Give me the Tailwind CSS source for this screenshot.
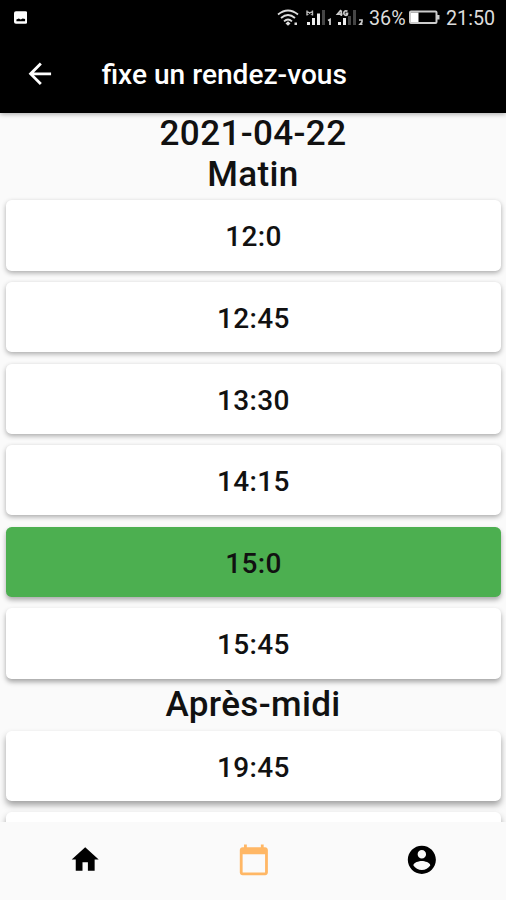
<!DOCTYPE html>
<html lang="fr">
<head>
<meta charset="utf-8">
<title>fixe un rendez-vous</title>
<script src="https://cdn.jsdelivr.net/npm/@tailwindcss/browser@4"></script>
</head>
<body class="w-[506px] h-[900px] overflow-hidden bg-[#fafafa] font-['Roboto','Noto_Sans',sans-serif] text-[#111] flex flex-col">
<header class="bg-black text-white h-[112.5px] shrink-0 z-10 shadow-[0_1px_5px_rgba(0,0,0,.35)]">
  <div class="h-9 flex items-center justify-between pl-[13.5px] pr-[11px]">
    <svg class="w-[13.5px] h-[13px] -mt-[1px]" viewBox="0 0 14 13"><rect width="14" height="13" rx="2" fill="#fff"/><path d="M2.500 10.500V8.500L5 7.500l2 1 2-1 2.500 .5v2.500z" fill="#000"/></svg>
    <div class="flex items-center text-[#dcdcdc]">
      <svg class="w-[92px] h-[22px]" viewBox="277 7 92 22" fill="none">
        <g stroke="#ddd" stroke-width="1.800"><path d="M278 14.500q10-8 20 0M281 18q7-6 14 0M284 21.300q4-3.600 8 0"/></g>
        <path d="M285.500 23.500l2.500-2.200 2.500 2.200-2.500 2.300zM294.500 22.500h2.500v2.500h-2.500z" fill="#ddd"/>
        <path d="M306.500 11l6.500 4M306.500 15l6.500-4M307 10.500v5M312.500 10.500v5" stroke="#bbb" stroke-width="1.400"/>
        <path d="M307 22h3v3h-3zM312 18h3v7h-3zM317 13.500h3v11.500h-3z" fill="#eee"/>
        <path d="M322 10h3v15h-3z" fill="#444"/>
        <path d="M328 20.500l2-1v5.500" stroke="#ccc" stroke-width="1.800"/>
        <path d="M341 10l-3.500 4.200h5M341.300 10.500v5.500M347.500 11.300c-4-2-5 4-1.500 4 1.500 0 1.500-1 1.500-2h-2" stroke="#ccc" stroke-width="1.700"/>
        <path d="M338 22h3v3h-3zM343 18h3v7h-3z" fill="#eee"/>
        <path d="M348 16h3v9h-3zM353 10h3v15h-3z" fill="#444"/>
        <path d="M359 20h3v2l-2 2.300h2.500" stroke="#ccc" stroke-width="1.600"/>
      </svg>
      <span class="w-[40px] text-[19.700px] leading-9 whitespace-nowrap pt-[1px]">36%</span>
      <svg class="w-[31px] h-[15px] mr-[6px] -mt-[2px]" viewBox="0 0 31 15"><rect x="1" y="1.500" width="26.500" height="11.500" rx="1" fill="none" stroke="#ccc" stroke-width="2"/><path d="M28 5h2.500v4.500H28z" fill="#ccc"/><path d="M2 2.500h7.500v9.500H2z" fill="#fff"/></svg>
      <span class="text-[19.700px] leading-9 w-[49px] whitespace-nowrap pt-[1px]">21:50</span>
    </div>
  </div>
  <div class="h-[76px] flex items-center pl-[23px]">
    <svg class="w-[33.700px] h-[33.700px]" viewBox="0 0 24 24" fill="#fff"><path d="M20 11H7.830l5.590-5.590L12 4l-8 8 8 8 1.410-1.410L7.830 13H20v-2z"/></svg>
    <h1 class="ml-[45px] pt-[2px] text-[28.100px] leading-[36px] font-medium whitespace-nowrap">fixe un rendez-vous</h1>
  </div>
</header>
<main class="flex-1 min-h-0 overflow-hidden text-center font-medium">
  <h2 class="text-[35.100px] leading-[41.200px] font-medium tracking-[0.350px]">2021-04-22</h2>
  <h2 class="text-[35.100px] leading-[41.200px] font-medium tracking-[0.350px]">Matin</h2>
  <div class="pl-[6px] pr-[5px] py-[5.500px] flex flex-col gap-[11.300px] text-[28px] leading-[74px] tracking-[0.350px]">
    <div class="h-[70.300px] rounded-[5.600px] bg-white shadow-[0_2px_5px_rgba(0,0,0,.32)]">12:0</div>
    <div class="h-[70.300px] rounded-[5.600px] bg-white shadow-[0_2px_5px_rgba(0,0,0,.32)]">12:45</div>
    <div class="h-[70.300px] rounded-[5.600px] bg-white shadow-[0_2px_5px_rgba(0,0,0,.32)]">13:30</div>
    <div class="h-[70.300px] rounded-[5.600px] bg-white shadow-[0_2px_5px_rgba(0,0,0,.32)]">14:15</div>
    <div class="h-[70.300px] rounded-[5.600px] bg-[#4caf50] shadow-[0_3px_5px_rgba(0,0,0,.32)]">15:0</div>
    <div class="h-[70.300px] rounded-[5.600px] bg-white shadow-[0_3px_5px_rgba(0,0,0,.34)]">15:45</div>
  </div>
  <h2 class="text-[35.100px] leading-[41.200px] font-medium tracking-[0.350px]">Après-midi</h2>
  <div class="pl-[6px] pr-[5px] py-[5.200px] flex flex-col gap-[11.300px] text-[28px] leading-[73px] tracking-[0.350px]">
    <div class="h-[70.300px] rounded-[5.600px] bg-white shadow-[0_4px_6px_rgba(0,0,0,.36)]">19:45</div>
    <div class="h-[70.300px] rounded-[5.600px] bg-white shadow-[0_4px_6px_rgba(0,0,0,.36)]"></div>
  </div>
</main>
<nav class="h-[78.500px] shrink-0 bg-[#fafafa] grid grid-cols-3 place-items-center pb-[1px] pl-[1px] z-10">
  <svg class="w-[32.400px] h-[33.200px] mb-[1.500px]" viewBox="0 0 24 24" preserveAspectRatio="none"><path d="M10 20v-6h4v6h5v-8h3L12 3 2 12h3v8z"/></svg>
  <svg class="w-[33.700px] h-[33.700px]" viewBox="0 0 24 24" fill="#ffb765"><path d="M20 3h-1V1h-2v2H7V1H5v2H4c-1.100 0-2 .9-2 2v16c0 1.100.9 2 2 2h16c1.100 0 2-.9 2-2V5c0-1.100-.9-2-2-2zm0 18H4V8h16v13z"/></svg>
  <svg class="w-[33.700px] h-[33.700px]" viewBox="0 0 24 24"><path d="M12 2C6.480 2 2 6.480 2 12s4.480 10 10 10 10-4.480 10-10S17.520 2 12 2zm0 3c1.660 0 3 1.340 3 3s-1.340 3-3 3-3-1.340-3-3 1.340-3 3-3zm0 14.200c-2.500 0-4.710-1.280-6-3.220.030-1.990 4-3.080 6-3.080 1.990 0 5.970 1.090 6 3.080-1.290 1.940-3.500 3.220-6 3.220z"/></svg>
</nav>
</body>
</html>
